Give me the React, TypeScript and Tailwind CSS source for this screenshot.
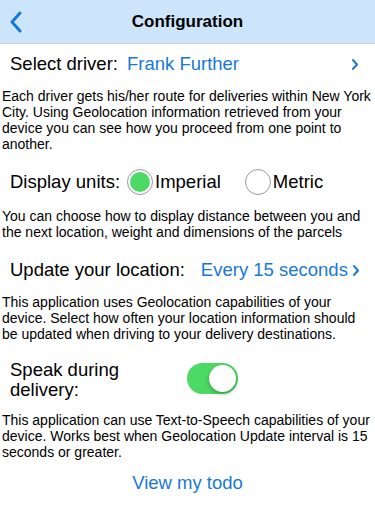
import React, { useState } from "react";

const Chevron = ({ className }: { className?: string }) => (
    <svg viewBox="0 0 10 16" className={className} fill="none" stroke="currentColor" strokeWidth={2.6} strokeLinecap="round" strokeLinejoin="round">
        <path d="M2.5 2.5 L7.5 8 L2.5 13.5" />
    </svg>
);

const Radio = ({ checked }: { checked: boolean }) => (
    <span className="flex h-[26px] w-[26px] items-center justify-center rounded-full border-[1.5px] border-[#9a9a9a] bg-white">
        {checked && <span className="h-[20px] w-[20px] rounded-full bg-[#4cd964]" />}
    </span>
);

// Configuration screen
export default function App() {
    const [units, setUnits] = useState<"imperial" | "metric">("imperial");
    const [speak, setSpeak] = useState(true);

    return (
        <div className="h-[513px] w-[375px] overflow-hidden bg-white text-black" style={{ fontFamily: "'Liberation Sans', Arial, sans-serif" }}>
            {/* Header */}
            <div className="relative flex h-[44px] items-center justify-center border-b border-[#cfd3d8] bg-[#cce5fb]">
                <button className="absolute left-[9px] top-[11px] text-[#1779d6]">
                    <svg viewBox="0 0 14 22" className="h-[22px] w-[14px]" fill="none" stroke="currentColor" strokeWidth={3} strokeLinecap="round" strokeLinejoin="round">
                        <path d="M11 2 L3 11 L11 20" />
                    </svg>
                </button>
                <h1 className="text-[17px] font-bold">Configuration</h1>
            </div>

            {/* Driver */}
            <div className="mt-[9px] flex h-[22px] items-center whitespace-nowrap pl-[10px] pr-[16px] text-[18.5px] leading-[22px]">
                <span>Select driver:</span>
                <span className="ml-[9px] text-[#1779d6]">Frank Further</span>
                <Chevron className="ml-auto h-[13px] w-[8px] text-[#1779d6]" />
            </div>
            <p className="mt-[13px] px-[2px] text-[14px] leading-[16px]">
                Each driver gets his/her route for deliveries within New York City. Using Geolocation information retrieved from your device you can see how you proceed from one point to another.
            </p>

            {/* Units */}
            <div className="mt-[17px] flex h-[26px] items-center whitespace-nowrap pl-[10px] text-[18.5px] leading-[22px]">
                <span>Display units:</span>
                <button className="ml-[7px] flex items-center" onClick={() => setUnits("imperial")}>
                    <Radio checked={units === "imperial"} />
                    <span className="ml-[2px]">Imperial</span>
                </button>
                <button className="ml-[24px] flex items-center" onClick={() => setUnits("metric")}>
                    <Radio checked={units === "metric"} />
                    <span className="ml-[2px]">Metric</span>
                </button>
            </div>
            <p className="mt-[13px] px-[2px] text-[14px] leading-[16px]">
                You can choose how to display distance between you and the next location, weight and dimensions of the parcels
            </p>

            {/* Location */}
            <div className="mt-[19px] flex h-[22px] items-center whitespace-nowrap pl-[10px] text-[18.5px] leading-[22px]">
                <span>Update your location:</span>
                <span className="ml-[16px] text-[#1779d6]">Every 15 seconds</span>
                <Chevron className="ml-[4px] h-[13px] w-[8px] text-[#1779d6]" />
            </div>
            <p className="mt-[13px] px-[2px] text-[14px] leading-[16px]">
                This application uses Geolocation capabilities of your device. Select how often your location information should be updated when driving to your delivery destinations.
            </p>

            {/* Speak */}
            <div className="mt-[18px] flex items-center pl-[10px]">
                <span className="w-[170px] text-[18.5px] leading-[20px]">Speak during delivery:</span>
                <button
                    onClick={() => setSpeak(!speak)}
                    className={`-mt-[3px] ml-[7px] flex h-[31px] w-[51px] items-center rounded-full p-[2px] ${speak ? "justify-end bg-[#4cd964]" : "justify-start bg-[#e5e5ea]"}`}
                >
                    <span className="h-[27px] w-[27px] rounded-full bg-white shadow-[0_2px_4px_rgba(0,0,0,0.3)]" />
                </button>
            </div>
            <p className="mt-[12px] px-[2px] text-[14px] leading-[16px]">
                This application can use Text-to-Speech capabilities of your device. Works best when Geolocation Update interval is 15 seconds or greater.
            </p>

            <div className="mt-[12px] flex justify-center">
                <button className="text-[18.5px] leading-[22px] text-[#1779d6]">View my todo</button>
            </div>
        </div>
    );
}
